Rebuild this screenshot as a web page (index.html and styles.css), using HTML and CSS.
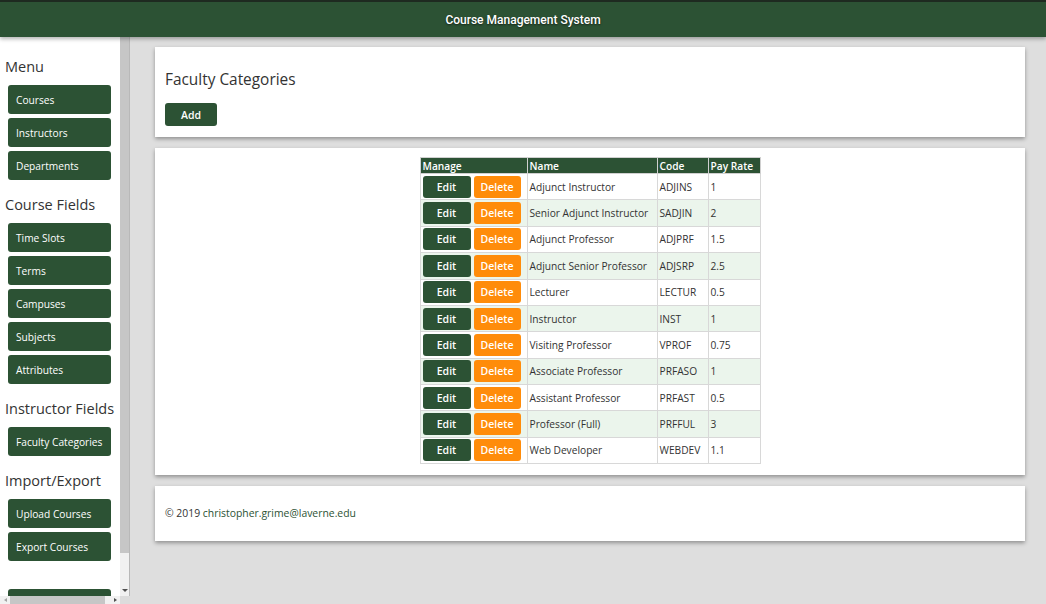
FILE: index.html
```html
<!DOCTYPE html>
<html lang="en">
<head>
<meta charset="utf-8">
<title>Course Management System</title>
<link rel="stylesheet" href="styles.css">
</head>
<body>
<header class="topbar"><h1 class="topbar-title">Course Management System</h1></header>
<div class="layout">
  <aside class="sidebar">
    <div class="sidebar-view">
      <nav class="sidebar-inner">
        <h2 class="side-heading">Menu</h2>
        <a class="nav-btn" href="#">Courses</a>
        <a class="nav-btn" href="#">Instructors</a>
        <a class="nav-btn" href="#">Departments</a>
        <h2 class="side-heading">Course Fields</h2>
        <a class="nav-btn" href="#">Time Slots</a>
        <a class="nav-btn" href="#">Terms</a>
        <a class="nav-btn" href="#">Campuses</a>
        <a class="nav-btn" href="#">Subjects</a>
        <a class="nav-btn" href="#">Attributes</a>
        <h2 class="side-heading">Instructor Fields</h2>
        <a class="nav-btn" href="#">Faculty Categories</a>
        <h2 class="side-heading">Import/Export</h2>
        <a class="nav-btn" href="#">Upload Courses</a>
        <a class="nav-btn" href="#">Export Courses</a>
        <a class="nav-btn nav-btn-last" href="#">Logout</a>
      </nav>
    </div>
    <div class="vscroll">
      <div class="vthumb"></div>
      <div class="vtrack"></div>
      <div class="sb-btn"><span class="tri tri-down"></span></div>
    </div>
    <div class="hscroll">
      <div class="sb-btn sb-left"><span class="tri tri-left"></span></div>
      <div class="hthumb"></div>
      <div class="htrack"></div>
      <div class="sb-btn sb-right"><span class="tri tri-right"></span></div>
    </div>
    <div class="sb-corner"></div>
  </aside>
  <main class="content">
    <section class="card title-card">
      <h2 class="page-title">Faculty Categories</h2>
      <button class="btn btn-green btn-add">Add</button>
    </section>
    <section class="card table-card">
      <table class="data-table">
        <thead>
          <tr><th class="col-manage">Manage</th><th class="col-name">Name</th><th class="col-code">Code</th><th class="col-rate">Pay Rate</th></tr>
        </thead>
        <tbody>
          <tr><td class="manage"><button class="btn btn-green">Edit</button><button class="btn btn-orange">Delete</button></td><td>Adjunct Instructor</td><td>ADJINS</td><td>1</td></tr>
          <tr><td class="manage"><button class="btn btn-green">Edit</button><button class="btn btn-orange">Delete</button></td><td>Senior Adjunct Instructor</td><td>SADJIN</td><td>2</td></tr>
          <tr><td class="manage"><button class="btn btn-green">Edit</button><button class="btn btn-orange">Delete</button></td><td>Adjunct Professor</td><td>ADJPRF</td><td>1.5</td></tr>
          <tr><td class="manage"><button class="btn btn-green">Edit</button><button class="btn btn-orange">Delete</button></td><td>Adjunct Senior Professor</td><td>ADJSRP</td><td>2.5</td></tr>
          <tr><td class="manage"><button class="btn btn-green">Edit</button><button class="btn btn-orange">Delete</button></td><td>Lecturer</td><td>LECTUR</td><td>0.5</td></tr>
          <tr><td class="manage"><button class="btn btn-green">Edit</button><button class="btn btn-orange">Delete</button></td><td>Instructor</td><td>INST</td><td>1</td></tr>
          <tr><td class="manage"><button class="btn btn-green">Edit</button><button class="btn btn-orange">Delete</button></td><td>Visiting Professor</td><td>VPROF</td><td>0.75</td></tr>
          <tr><td class="manage"><button class="btn btn-green">Edit</button><button class="btn btn-orange">Delete</button></td><td>Associate Professor</td><td>PRFASO</td><td>1</td></tr>
          <tr><td class="manage"><button class="btn btn-green">Edit</button><button class="btn btn-orange">Delete</button></td><td>Assistant Professor</td><td>PRFAST</td><td>0.5</td></tr>
          <tr><td class="manage"><button class="btn btn-green">Edit</button><button class="btn btn-orange">Delete</button></td><td>Professor (Full)</td><td>PRFFUL</td><td>3</td></tr>
          <tr><td class="manage"><button class="btn btn-green">Edit</button><button class="btn btn-orange">Delete</button></td><td>Web Developer</td><td>WEBDEV</td><td>1.1</td></tr>
        </tbody>
      </table>
    </section>
    <footer class="card footer-card">
      <p class="footer-text">© 2019 <a class="footer-link" href="#">christopher.grime@laverne.edu</a></p>
    </footer>
  </main>
</div>
</body>
</html>
```

FILE: styles.css
```css
* { box-sizing: border-box; }

html, body {
  margin: 0;
  height: 100%;
  overflow: hidden;
}

body {
  font-family: "Open Sans", "Liberation Sans", sans-serif;
  color: #333;
  background: #dedede;
}

.topbar {
  position: relative;
  z-index: 2;
  height: 37px;
  background: #2c5234;
  border-top: 2px solid #1e2a20;
  box-shadow: 0 2px 4px rgba(0, 0, 0, 0.3);
  display: flex;
  align-items: center;
  justify-content: center;
}

.topbar-title {
  margin: 0;
  font-family: Roboto, "Liberation Sans", sans-serif;
  font-weight: 500;
  font-size: 12px;
  color: #fff;
  text-shadow: 0 1px 2px rgba(0, 0, 0, 0.6);
}

.layout {
  display: flex;
  height: calc(100% - 37px);
}

/* Sidebar with its own scrollbars */
.sidebar {
  width: 130px;
  flex: none;
  display: grid;
  grid-template-columns: 120px 10px;
  grid-template-rows: 1fr 8px;
  background: #fff;
}

.sidebar-view {
  overflow: hidden;
  background: #fff;
}

.sidebar-inner {
  width: 120px;
  padding: 9px 0 10px;
  display: flex;
  flex-direction: column;
  align-items: flex-start;
}

.side-heading {
  margin: 9px 0 6px 5px;
  font-size: 14.5px;
  line-height: 24px;
  font-weight: 400;
  color: #333;
  white-space: nowrap;
}

.nav-btn {
  display: flex;
  align-items: center;
  width: 103px;
  height: 29px;
  margin: 0 0 4px 8px;
  padding: 0 8px;
  background: #2c5234;
  color: #fff;
  font-size: 10.2px;
  font-weight: 500;
  text-decoration: none;
  border-radius: 3px;
  white-space: nowrap;
}

.nav-btn-last { margin-top: 24px; }

.vscroll {
  display: flex;
  flex-direction: column;
  background: #f1f1f1;
  border-right: 1px solid #b8b8b8;
}

.vthumb {
  height: 516px;
  background: #c6c6c6;
}

.vtrack { flex: 1; }

.sb-btn {
  flex: none;
  display: flex;
  align-items: center;
  justify-content: center;
  height: 11px;
  background: #f1f1f1;
}

.hscroll {
  display: flex;
  background: #f1f1f1;
}

.sb-left { width: 10px; height: 8px; }
.sb-right { width: 10px; height: 8px; }

.hthumb {
  width: 95px;
  background: #c6c6c6;
}

.htrack { flex: 1; }

.sb-corner { background: #dcdcdc; }

.tri {
  width: 0;
  height: 0;
  border-style: solid;
}

.tri-down {
  border-width: 3px 3px 0 3px;
  border-color: #505050 transparent transparent transparent;
}

.tri-left {
  border-width: 2.5px 3px 2.5px 0;
  border-color: transparent #a3a3a3 transparent transparent;
}

.tri-right {
  border-width: 2.5px 0 2.5px 3px;
  border-color: transparent transparent transparent #505050;
}

/* Main content */
.content {
  flex: 1;
  padding: 10px 21px 0 25px;
  overflow: hidden;
}

.card {
  background: #fff;
  box-shadow: 0 2px 4px rgba(0, 0, 0, 0.35);
  margin-bottom: 11px;
}

.title-card {
  padding: 21px 10px 11px;
}

.page-title {
  margin: 0 0 11px;
  font-size: 15.4px;
  line-height: 24px;
  font-weight: 400;
  color: #333;
}

.btn {
  border: 0;
  border-radius: 3px;
  color: #fff;
  font-family: "Open Sans", "Liberation Sans", sans-serif;
  font-size: 10.5px;
  font-weight: 600;
  padding: 0;
  cursor: pointer;
}

.btn-green { background: #2c5234; }
.btn-orange { background: #ff8c0a; }

.btn-add {
  display: block;
  width: 52px;
  height: 23px;
}

.table-card {
  padding: 9px 10px 11px;
}

.data-table {
  margin: 0 auto;
  border-collapse: collapse;
  table-layout: fixed;
  width: 340px;
  font-size: 10.2px;
  border: 1px solid #d0d0d0;
}

.data-table th {
  height: 16px;
  background: #2c5234;
  color: #fff;
  font-weight: 600;
  text-align: left;
  line-height: 14px;
  padding: 0 2px;
  border: 1px solid #d0d0d0;
  border-top: 0;
  white-space: nowrap;
}

.col-manage { width: 107px; }
.col-name { width: 130px; }
.col-code { width: 51px; }
.col-rate { width: 52px; }

.data-table td {
  padding: 1.7px 2px;
  border: 1px solid #d8d8d8;
  line-height: 14px;
  color: #333;
  font-weight: 500;
  white-space: nowrap;
}

.data-table tbody tr:nth-child(even) { background: #ebf5ec; }

.manage { font-size: 0; }

.manage .btn {
  height: 22px;
  vertical-align: top;
  font-size: 10.5px;
}

.manage .btn-green { width: 48px; margin-right: 3px; }
.manage .btn-orange { width: 47px; }

.footer-card {
  padding: 19px 10px;
}

.footer-text {
  margin: 0;
  font-size: 10.4px;
  line-height: 17px;
}

.footer-link {
  color: #2c5234;
  text-decoration: none;
}
```
